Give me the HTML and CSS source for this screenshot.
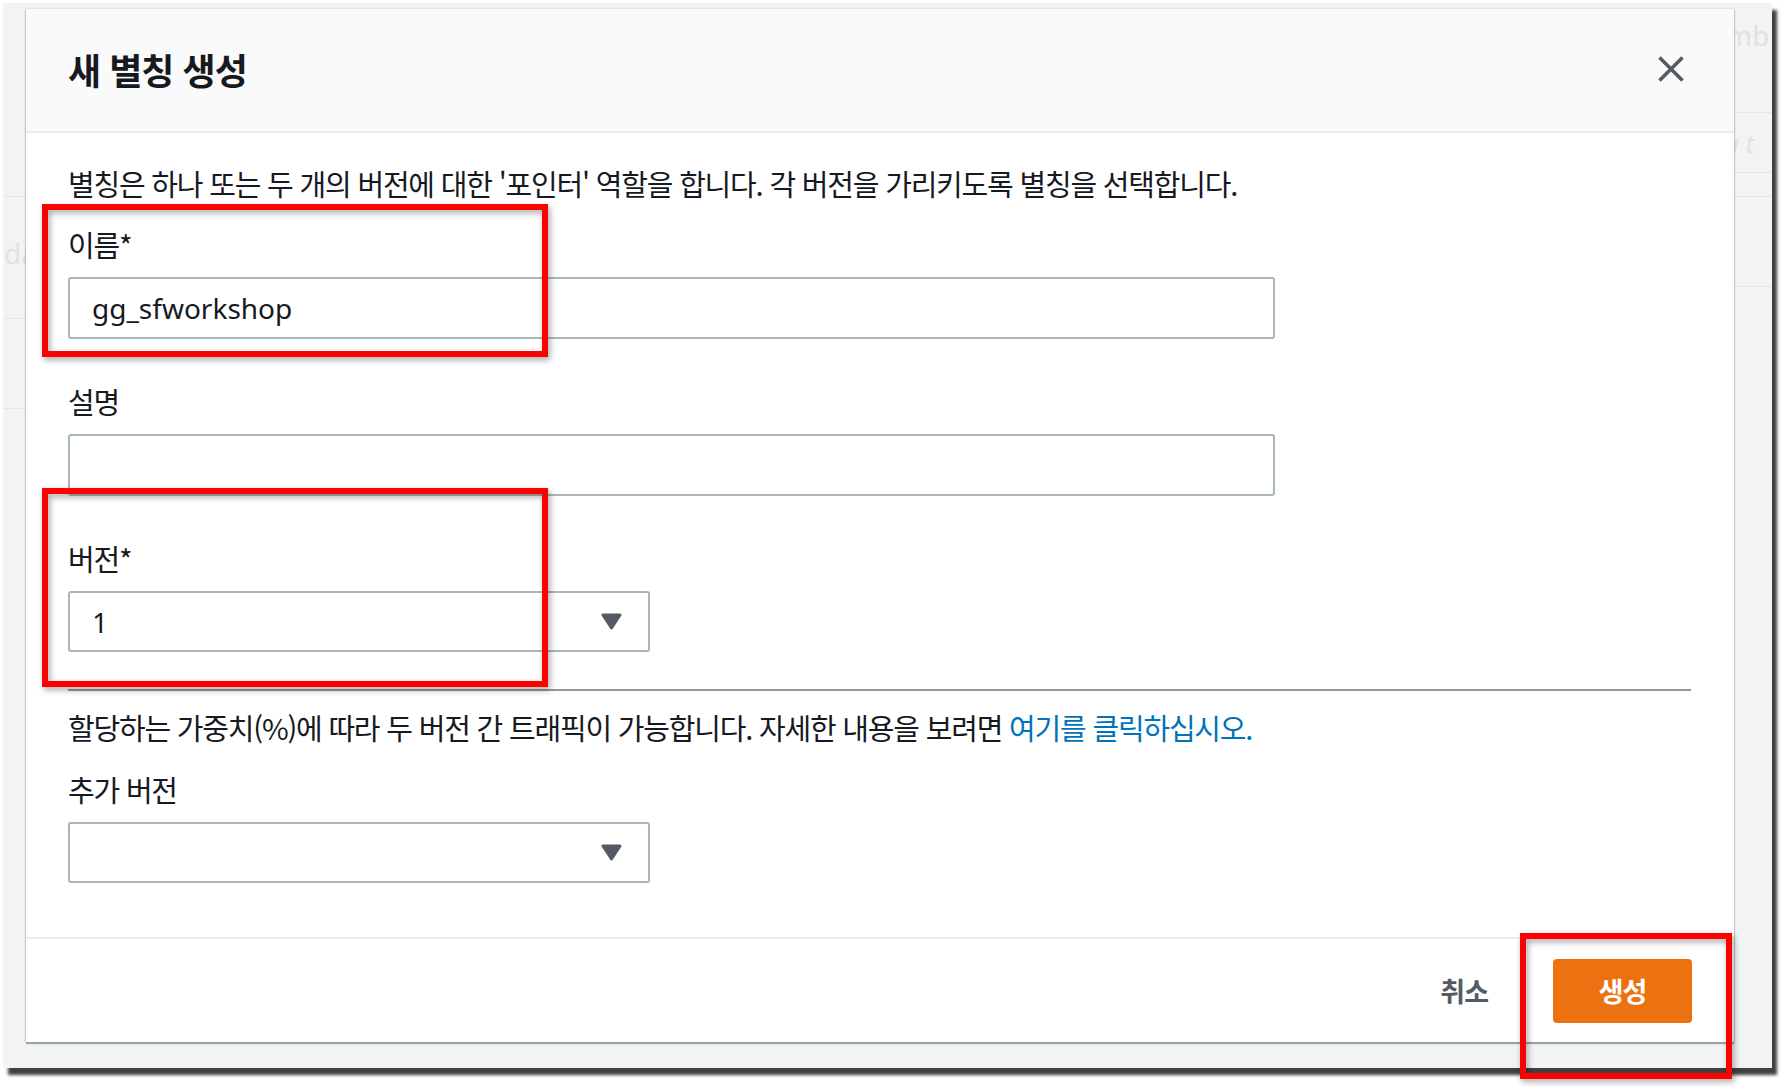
FILE: index.html
```html
<!DOCTYPE html>
<html lang="ko">
<head>
<meta charset="utf-8">
<title>새 별칭 생성</title>
<link rel="stylesheet" href="styles.css">
</head>
<body>
<div class="screen">
  <div class="backdrop">
    <div class="strip strip-left">
      <div class="bg-row bg-row-a"></div>
      <div class="bg-row bg-row-b"><span class="bg-text">da</span></div>
      <div class="bg-row bg-row-c"></div>
    </div>
    <div class="strip strip-right">
      <div class="bg-row bg-row-ra"><span class="bg-text">mb</span></div>
      <div class="bg-row bg-row-rb"><span class="bg-text bg-italic">a t</span></div>
      <div class="bg-row bg-row-rc"></div>
      <div class="bg-row bg-row-rd"></div>
    </div>
  </div>

  <div class="modal">
    <header class="modal-header">
      <h2 class="modal-title">새 별칭 생성</h2>
      <button class="close" type="button" aria-label="닫기">
        <svg width="28" height="28" viewBox="0 0 28 28"><path d="M2.5 2.5 L25.5 25.5 M25.5 2.5 L2.5 25.5" stroke="#545b64" stroke-width="3.6" fill="none"/></svg>
      </button>
    </header>
    <div class="modal-body">
      <p class="text intro">별칭은 하나 또는 두 개의 버전에 대한 '포인터' 역할을 합니다. 각 버전을 가리키도록 별칭을 선택합니다.</p>
      <div class="field field-first">
        <label class="label">이름*</label>
        <div class="input input-wide"><span class="value">gg_sfworkshop</span></div>
      </div>
      <div class="field">
        <label class="label">설명</label>
        <div class="input input-wide"></div>
      </div>
      <div class="field">
        <label class="label">버전*</label>
        <div class="input select"><span class="value">1</span>
          <svg class="caret" width="21" height="17" viewBox="0 0 21 17"><path d="M2 2 H19 L10.5 15 Z" fill="#545b64" stroke="#545b64" stroke-width="3" stroke-linejoin="round"/></svg>
        </div>
      </div>
      <div class="divider"></div>
      <p class="text weights">할당하는 가중치(%)에 따라 두 버전 간 트래픽이 가능합니다. 자세한 내용을 보려면 <a class="link" href="#">여기를 클릭하십시오.</a></p>
      <div class="field field-extra">
        <label class="label">추가 버전</label>
        <div class="input select"><span class="value"></span>
          <svg class="caret" width="21" height="17" viewBox="0 0 21 17"><path d="M2 2 H19 L10.5 15 Z" fill="#545b64" stroke="#545b64" stroke-width="3" stroke-linejoin="round"/></svg>
        </div>
      </div>
    </div>
    <footer class="modal-footer">
      <button class="btn-cancel" type="button">취소</button>
      <button class="btn-primary" type="button">생성</button>
    </footer>
  </div>

  <div class="mark mark-name"></div>
  <div class="mark mark-version"></div>
  <div class="mark mark-create"></div>
</div>
</body>
</html>
```

FILE: styles.css
```css
* { box-sizing: border-box; }

html, body {
  margin: 0;
  padding: 0;
  background: #ffffff;
}

body {
  width: 1787px;
  height: 1087px;
  overflow: hidden;
  font-family: "Noto Sans CJK KR", "Noto Sans", sans-serif;
  color: #16191f;
}

.screen {
  position: relative;
  width: 1787px;
  height: 1087px;
  padding: 3px 0 0 3px;
}

.backdrop {
  width: 1769px;
  height: 1065px;
  background: #f2f3f3;
  box-shadow: 5px 7px 3px rgba(30, 30, 30, 0.85);
  display: flex;
  justify-content: space-between;
}

.strip { display: flex; flex-direction: column; }
.strip-left { width: 23px; }
.strip-right { width: 38px; }

.bg-row {
  border-bottom: 1px solid #e4e7e7;
  flex: none;
}
.bg-row-a { height: 194px; }
.bg-row-b { height: 122px; }
.bg-row-c { height: 90px; }
.bg-row-ra { height: 110px; }
.bg-row-rb { height: 60px; }
.bg-row-rc { height: 24px; }
.bg-row-rd { height: 90px; }

.bg-text {
  display: block;
  font-family: "Noto Sans", sans-serif;
  font-size: 28px;
  line-height: 36px;
  color: #dfe2e3;
  white-space: nowrap;
}
.bg-row-b .bg-text { margin-top: 38px; margin-left: 1px; }
.bg-row-ra .bg-text { margin-top: 14px; margin-left: -8px; }
.bg-row-rb .bg-text { margin-top: 12px; margin-left: -10px; font-size: 26px; font-style: italic; }

/* Modal */
.modal {
  position: absolute;
  left: 26px;
  top: 9px;
  width: 1708px;
  height: 1033px;
  background: #ffffff;
  display: flex;
  flex-direction: column;
  box-shadow: 0 2px 1px 0 rgba(0, 28, 36, 0.35), 1px 0 1px 0 rgba(0, 28, 36, 0.15), -1px 0 1px 0 rgba(0, 28, 36, 0.15);
}

.modal-header {
  height: 124px;
  flex: none;
  background: #fafafa;
  border-bottom: 2px solid #eaeded;
  display: flex;
  align-items: center;
  justify-content: space-between;
  padding: 0 49px 2px 42px;
}

.modal-title {
  margin: 0;
  font-size: 36px;
  font-weight: 700;
  letter-spacing: -1px;
  line-height: 40px;
  color: #16191f;
}

.close {
  border: 0;
  background: none;
  padding: 0;
  width: 28px;
  height: 28px;
  display: block;
}
.close svg { display: block; }

.modal-body {
  flex: none;
  height: 804px;
  padding: 30px 43px 0 42px;
}

.text {
  margin: 0;
  font-size: 29px;
  line-height: 40px;
  letter-spacing: -1.2px;
  white-space: nowrap;
}

.field { margin-top: 42px; display: flex; flex-direction: column; }
.field-first { margin-top: 21px; }
.field-extra { margin-top: 22px; }

.label {
  display: block;
  font-size: 29px;
  line-height: 40px;
  letter-spacing: -1.2px;
  margin-bottom: 13px;
}

.input {
  height: 62px;
  border: 2px solid #aab7b8;
  border-radius: 3px;
  background: #ffffff;
  display: flex;
  align-items: center;
  padding: 0 26px 0 22px;
}
.input-wide { width: 1207px; }

.select {
  width: 582px;
  height: 61px;
  justify-content: space-between;
}

.value {
  font-family: "Noto Sans", sans-serif;
  font-size: 28px;
  color: #16191f;
  line-height: 40px;
}

.caret { display: block; flex: none; }

.divider {
  margin-top: 37px;
  height: 2px;
  background: #8f9a9b;
}

.weights { margin-top: 16px; }

.link {
  color: #0073bb;
  text-decoration: none;
}

.modal-footer {
  flex: 1;
  border-top: 2px solid #eaeded;
  display: flex;
  justify-content: flex-end;
  align-items: center;
  gap: 65px;
  padding: 0 42px 0 0;
}

.btn-cancel {
  border: 0;
  background: none;
  padding: 0;
  font-family: "Noto Sans CJK KR", sans-serif;
  font-size: 27px;
  font-weight: 700;
  letter-spacing: -1px;
  color: #545b64;
}

.btn-primary {
  width: 139px;
  height: 64px;
  border: 0;
  border-radius: 4px;
  background: #ec7211;
  color: #ffffff;
  font-family: "Noto Sans CJK KR", sans-serif;
  font-size: 27px;
  font-weight: 700;
  letter-spacing: -1px;
  padding: 0;
}

/* Red annotation boxes drawn over the screenshot */
.mark {
  position: absolute;
  border: 6px solid #ff0000;
  filter: drop-shadow(2px 3px 3px rgba(0, 0, 0, 0.35));
}
.mark-name { left: 42px; top: 204px; width: 506px; height: 153px; }
.mark-version { left: 42px; top: 488px; width: 506px; height: 199px; }
.mark-create { left: 1520px; top: 933px; width: 212px; height: 146px; }
```
